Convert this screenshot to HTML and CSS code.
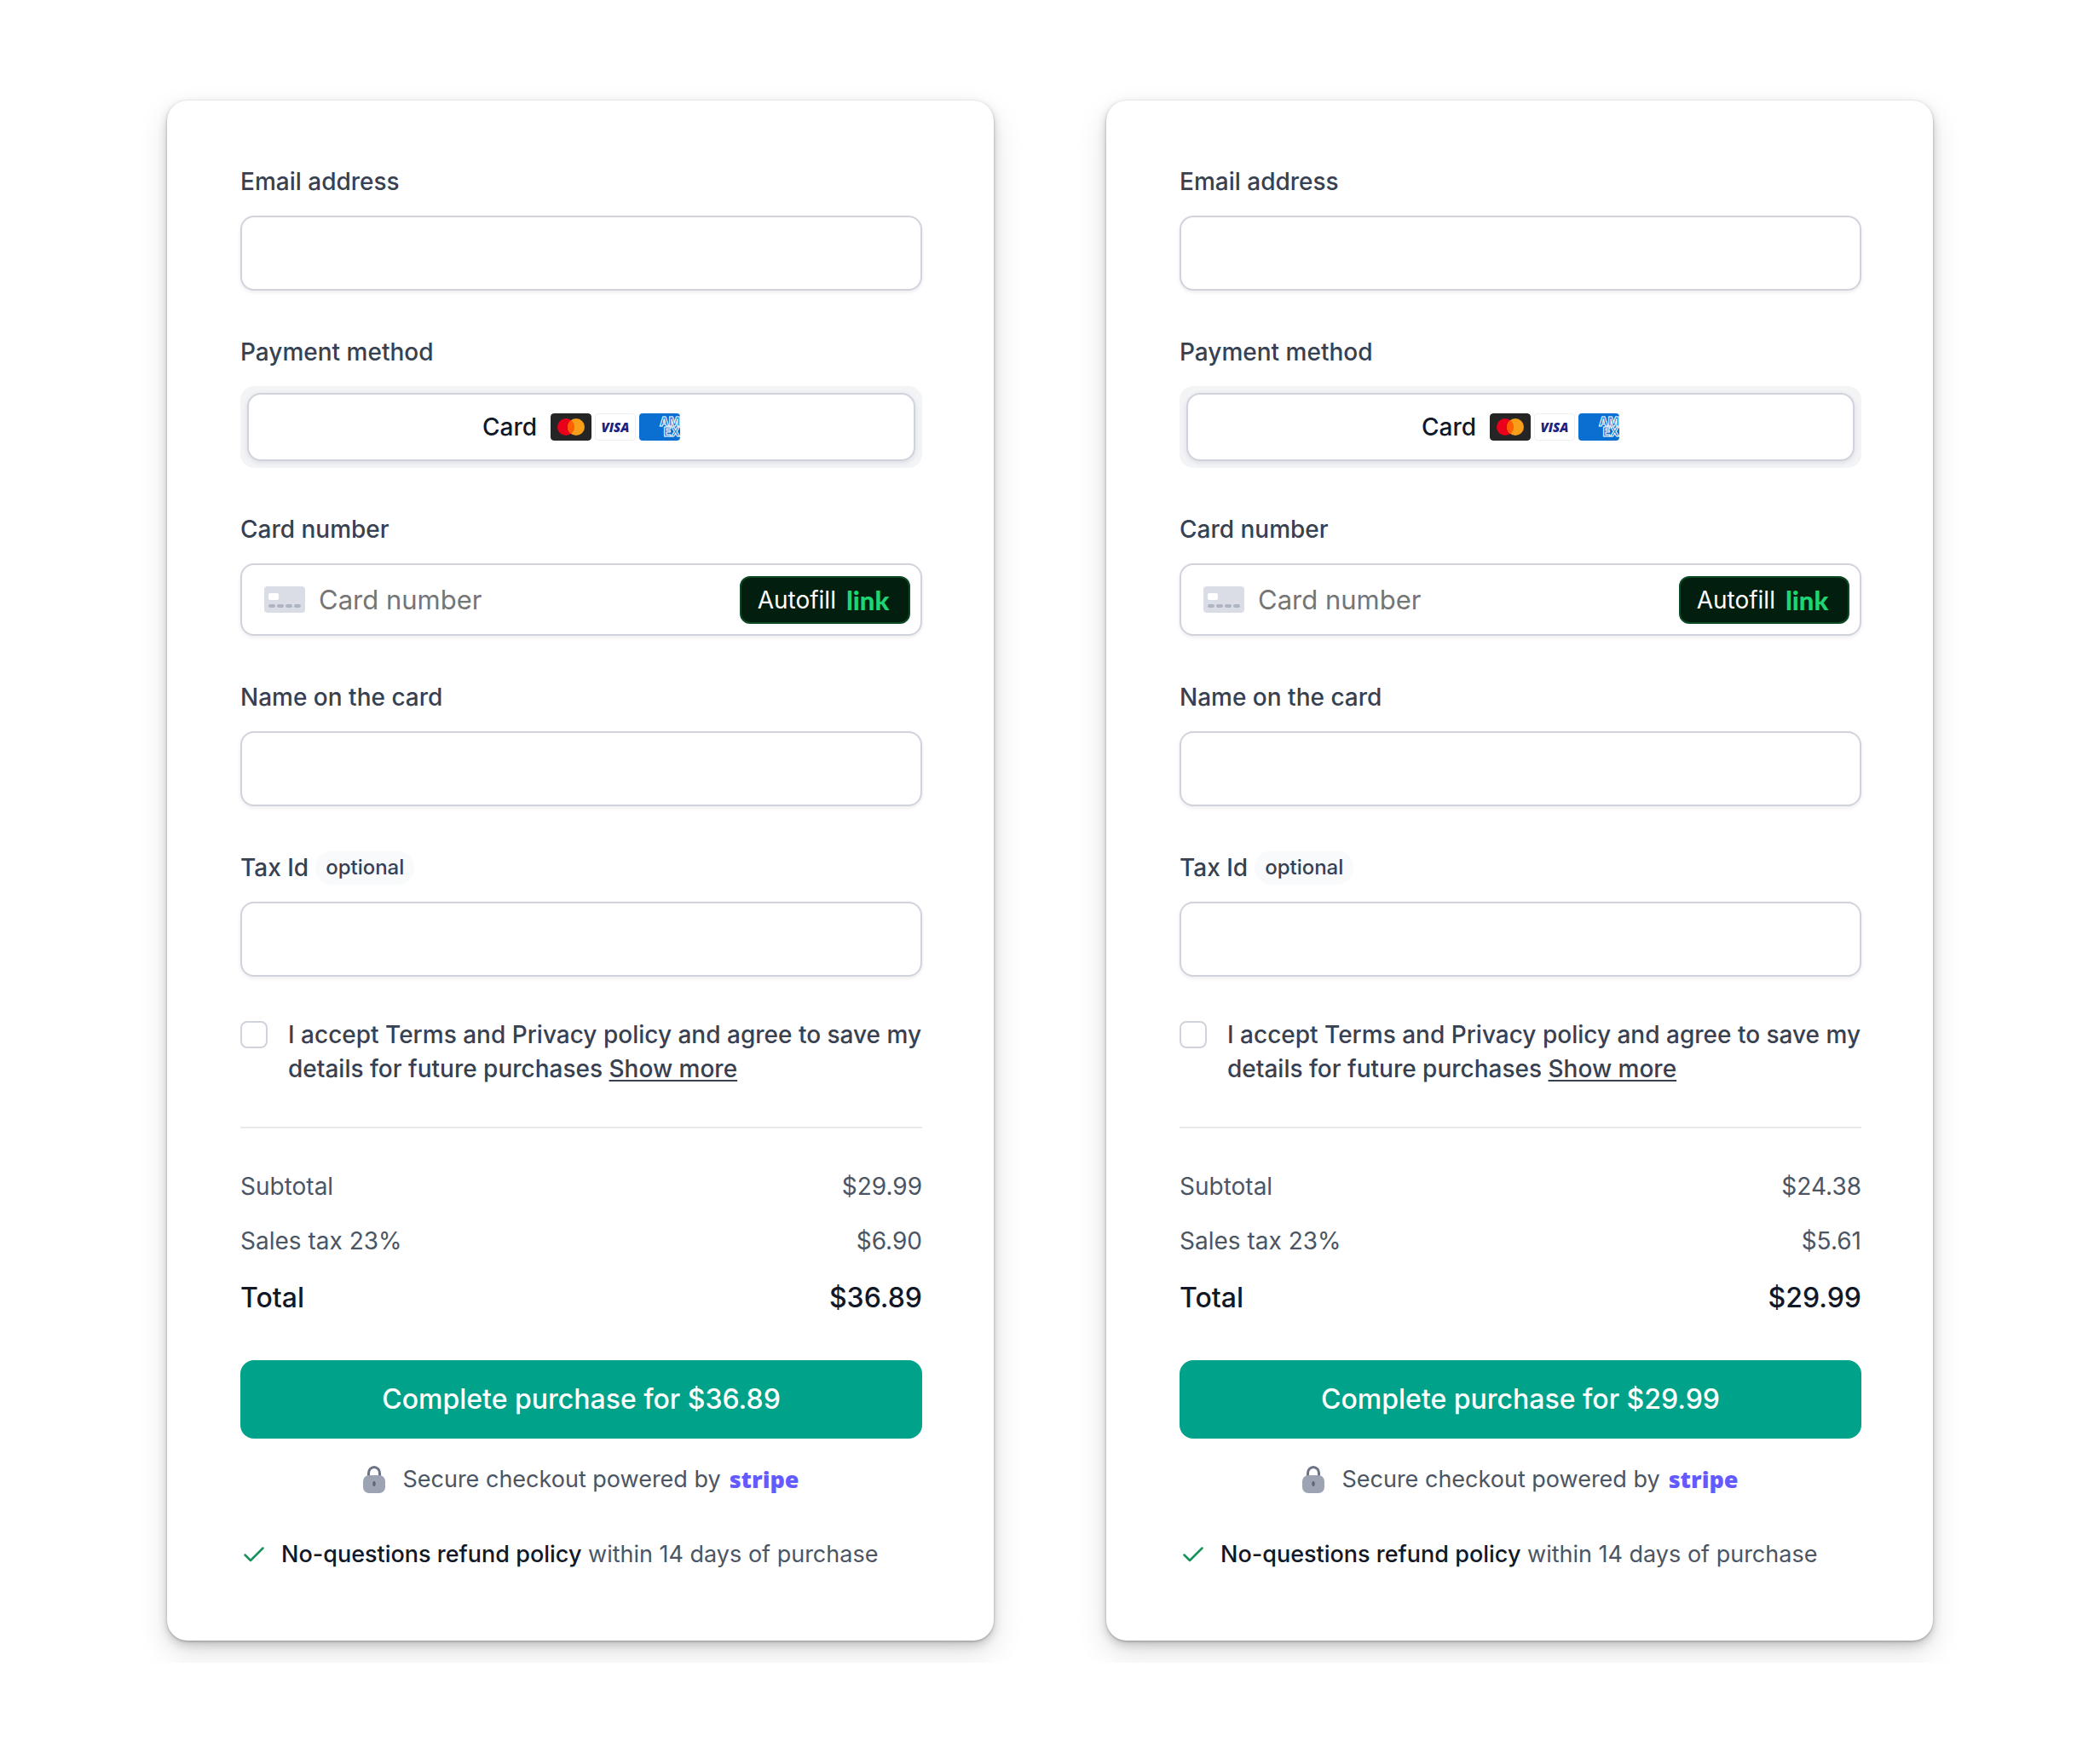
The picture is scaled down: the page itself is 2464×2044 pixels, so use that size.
FILE: index.html
```html
<!DOCTYPE html>
<html lang="en">
<head>
<meta charset="utf-8">
<meta name="viewport" content="width=device-width, initial-scale=1">
<title>Checkout</title>
<link rel="stylesheet" href="styles.css">
</head>
<body>
<svg class="sprite" aria-hidden="true">
  <symbol id="mastercard" viewBox="0 0 48 32">
    <rect width="48" height="32" rx="4" fill="#252525"/>
    <circle cx="18" cy="16" r="10" fill="#eb001b"/>
    <circle cx="30" cy="16" r="10" fill="#f79e1b"/>
    <path d="M24 8a10 10 0 0 1 0 16a10 10 0 0 1 0-16z" fill="#ff5f00"/>
  </symbol>
  <symbol id="card" viewBox="0 0 48 31">
    <rect width="48" height="31" rx="4" fill="#dadde6"/>
    <rect x="5" y="8" width="12" height="8" rx="2" fill="#fff"/>
    <path d="M7 23h4M17 23h4M27 23h4M37 23h4" stroke="#b0b5c2" stroke-width="4" stroke-linecap="round"/>
  </symbol>
  <symbol id="lock" viewBox="0 0 26 32">
    <path d="M6.500 14V8.500a6.500 7 0 0 1 13 0V14" fill="none" stroke="#6b7385" stroke-width="3"/>
    <rect y="11" width="26" height="21" rx="7" fill="#9ca3b3"/>
    <ellipse cx="13" cy="21" rx="1.700" ry="3" fill="#5f6678"/>
  </symbol>
  <symbol id="check" viewBox="0 0 24 18">
    <path d="M1.500 9.500L8 16L22.500 1.500" fill="none" stroke="#16915a" stroke-width="2.500" stroke-linecap="round" stroke-linejoin="round"/>
  </symbol>
</svg>
<main class="page">
  <form class="checkout">
    <div class="field">
      <label class="label" for="email-a">Email address</label>
      <input class="input" id="email-a" type="email">
    </div>
    <div class="field">
      <span class="label" id="method-a">Payment method</span>
      <div class="segmented" role="group" aria-labelledby="method-a">
        <button class="segment" type="button">Card
          <span class="brands">
            <svg class="brand"><use href="#mastercard"/></svg>
            <span class="brand visa">VISA</span>
            <span class="brand amex"><span>AM</span><span>EX</span></span>
          </span>
        </button>
      </div>
    </div>
    <div class="field">
      <label class="label" for="number-a">Card number</label>
      <div class="card-box">
        <svg class="card-icon"><use href="#card"/></svg>
        <input class="card-input" id="number-a" type="text" placeholder="Card number">
        <button class="autofill" type="button">Autofill <span class="link-logo">link</span></button>
      </div>
    </div>
    <div class="field">
      <label class="label" for="name-a">Name on the card</label>
      <input class="input" id="name-a" type="text">
    </div>
    <div class="field">
      <label class="label" for="tax-a">Tax Id <span class="pill">optional</span></label>
      <input class="input" id="tax-a" type="text">
    </div>
    <div class="terms">
      <input class="tick" id="terms-a" type="checkbox">
      <label for="terms-a">I accept Terms and Privacy policy and agree to save my details for future purchases <a class="more" href="#">Show more</a></label>
    </div>
    <dl class="totals">
      <div class="line"><dt>Subtotal</dt><dd>$29.99</dd></div>
      <div class="line"><dt>Sales tax 23%</dt><dd>$6.90</dd></div>
      <div class="line total"><dt>Total</dt><dd>$36.89</dd></div>
    </dl>
    <button class="submit" type="button">Complete purchase for $36.89</button>
    <p class="secure"><svg class="lock"><use href="#lock"/></svg><span>Secure checkout powered by</span><span class="stripe">stripe</span></p>
    <p class="refund"><svg class="check"><use href="#check"/></svg><span><strong>No-questions refund policy</strong> within 14 days of purchase</span></p>
  </form>
  <form class="checkout">
    <div class="field">
      <label class="label" for="email-b">Email address</label>
      <input class="input" id="email-b" type="email">
    </div>
    <div class="field">
      <span class="label" id="method-b">Payment method</span>
      <div class="segmented" role="group" aria-labelledby="method-b">
        <button class="segment" type="button">Card
          <span class="brands">
            <svg class="brand"><use href="#mastercard"/></svg>
            <span class="brand visa">VISA</span>
            <span class="brand amex"><span>AM</span><span>EX</span></span>
          </span>
        </button>
      </div>
    </div>
    <div class="field">
      <label class="label" for="number-b">Card number</label>
      <div class="card-box">
        <svg class="card-icon"><use href="#card"/></svg>
        <input class="card-input" id="number-b" type="text" placeholder="Card number">
        <button class="autofill" type="button">Autofill <span class="link-logo">link</span></button>
      </div>
    </div>
    <div class="field">
      <label class="label" for="name-b">Name on the card</label>
      <input class="input" id="name-b" type="text">
    </div>
    <div class="field">
      <label class="label" for="tax-b">Tax Id <span class="pill">optional</span></label>
      <input class="input" id="tax-b" type="text">
    </div>
    <div class="terms">
      <input class="tick" id="terms-b" type="checkbox">
      <label for="terms-b">I accept Terms and Privacy policy and agree to save my details for future purchases <a class="more" href="#">Show more</a></label>
    </div>
    <dl class="totals">
      <div class="line"><dt>Subtotal</dt><dd>$24.38</dd></div>
      <div class="line"><dt>Sales tax 23%</dt><dd>$5.61</dd></div>
      <div class="line total"><dt>Total</dt><dd>$29.99</dd></div>
    </dl>
    <button class="submit" type="button">Complete purchase for $29.99</button>
    <p class="secure"><svg class="lock"><use href="#lock"/></svg><span>Secure checkout powered by</span><span class="stripe">stripe</span></p>
    <p class="refund"><svg class="check"><use href="#check"/></svg><span><strong>No-questions refund policy</strong> within 14 days of purchase</span></p>
  </form>
</main>
</body>
</html>
```
FILE: styles.css
```css
* {
  box-sizing: border-box;
}

body {
  margin: 0;
  background: #fff;
  color: #374151;
  font: 500 28px/40px Inter, "Liberation Sans", sans-serif;
}

button,
input {
  font: inherit;
  color: inherit;
}

.sprite {
  position: absolute;
  width: 0;
  height: 0;
}

.page {
  display: grid;
  grid-template-columns: repeat(2, minmax(0, 1fr));
  gap: 132px;
  padding: 118px 196px 26px;
  overflow: hidden;
}

.checkout {
  display: flex;
  flex-direction: column;
  padding: 75px 84px 81px 86px;
  border-radius: 24px;
  background: #fff;
  box-shadow: 0 1px 3px rgba(0, 0, 0, 0.26), 0 5px 12px rgba(0, 0, 0, 0.18), 0 14px 36px rgba(0, 0, 0, 0.12);
}

.field {
  display: flex;
  flex-direction: column;
  gap: 20px;
  margin-bottom: 52px;
}

.label {
  display: flex;
  align-items: center;
  gap: 8px;
}

.input,
.card-box {
  width: 100%;
  border: 2px solid #d1d3dc;
  border-radius: 16px;
  background: #fff;
  box-shadow: 0 2px 4px rgba(30, 30, 80, 0.08);
}

.input {
  height: 88px;
  padding: 0 26px;
}

.segmented {
  display: flex;
  padding: 8px;
  border-radius: 16px;
  background: #f3f4f6;
}

.segment {
  display: flex;
  flex: 1;
  align-items: center;
  justify-content: center;
  gap: 16px;
  height: 80px;
  border: 2px solid #d1d3dc;
  border-radius: 16px;
  background: #fff;
  color: #111827;
  box-shadow: 0 2px 6px rgba(30, 30, 80, 0.1);
}

.brands {
  display: flex;
  gap: 4px;
}

.brand {
  display: flex;
  width: 48px;
  height: 32px;
  border-radius: 4px;
}

.visa {
  align-items: center;
  justify-content: center;
  border: 1px solid #efeff3;
  color: #1a237e;
  font: italic 800 15px/30px "Open Sans", sans-serif;
}

.amex {
  flex-direction: column;
  align-items: flex-end;
  justify-content: center;
  background: #0a6fd1;
  color: #0a6fd1;
  font: 800 14px/12px Inter, sans-serif;
  -webkit-text-stroke: 1px #fff;
}

.card-box {
  display: flex;
  align-items: center;
  height: 85px;
  padding: 0 12px 0 26px;
}

.card-icon {
  width: 48px;
  height: 31px;
}

.card-input {
  flex: 1;
  min-width: 0;
  padding: 0 16px;
  border: 0;
  outline: 0;
  background: none;
  font-size: 31px;
  font-weight: 400;
}

.card-input::placeholder {
  color: #757575;
  opacity: 1;
}

.autofill {
  display: flex;
  align-items: center;
  justify-content: center;
  gap: 12px;
  width: 200px;
  height: 56px;
  padding: 0 4px 0 0;
  border: 2px solid #0b4a25;
  border-radius: 12px;
  background: #011e0f;
  color: #fff;
  font-weight: 400;
}

.link-logo {
  color: #1dd673;
  font: 900 31px/40px Lato, sans-serif;
}

.pill {
  padding: 0 12px;
  border-radius: 20px;
  background: #f9fafb;
  font-size: 24px;
}

.terms {
  display: flex;
  align-items: flex-start;
  gap: 24px;
  margin-top: -4px;
  margin-bottom: 48px;
}

.tick {
  flex: none;
  width: 32px;
  height: 32px;
  margin: 4px 0;
  border: 2px solid #d1d3dc;
  border-radius: 8px;
  background: #fff;
  appearance: none;
}

.more {
  color: inherit;
  text-decoration: underline;
  text-decoration-thickness: 2px;
  text-underline-offset: 3px;
}

.totals {
  display: flex;
  flex-direction: column;
  gap: 24px;
  margin: 0 0 50px;
  padding-top: 48px;
  border-top: 2px solid #e9eaee;
}

.line {
  display: flex;
  justify-content: space-between;
  color: #4b5563;
  font-weight: 400;
}

.line dd {
  margin: 0;
}

.total {
  color: #111827;
  font-size: 32px;
  font-weight: 500;
  line-height: 46px;
}

.submit {
  height: 92px;
  border: 0;
  border-radius: 16px;
  background: #00a389;
  color: #fff;
  font-size: 32px;
}

.secure,
.refund {
  display: flex;
  align-items: center;
  margin: 0;
  color: #4b5563;
  font-size: 27px;
  font-weight: 400;
}

.secure {
  justify-content: center;
  margin: 28px 0 48px;
}

.lock {
  width: 26px;
  height: 32px;
  margin-right: 20px;
}

.stripe {
  margin-left: 10px;
  color: #635bff;
  font: 800 27px/40px "Open Sans", sans-serif;
}

.refund {
  gap: 20px;
  padding-left: 4px;
}

.refund strong {
  color: #111827;
  font-weight: 500;
}

.check {
  width: 24px;
  height: 18px;
}
```
